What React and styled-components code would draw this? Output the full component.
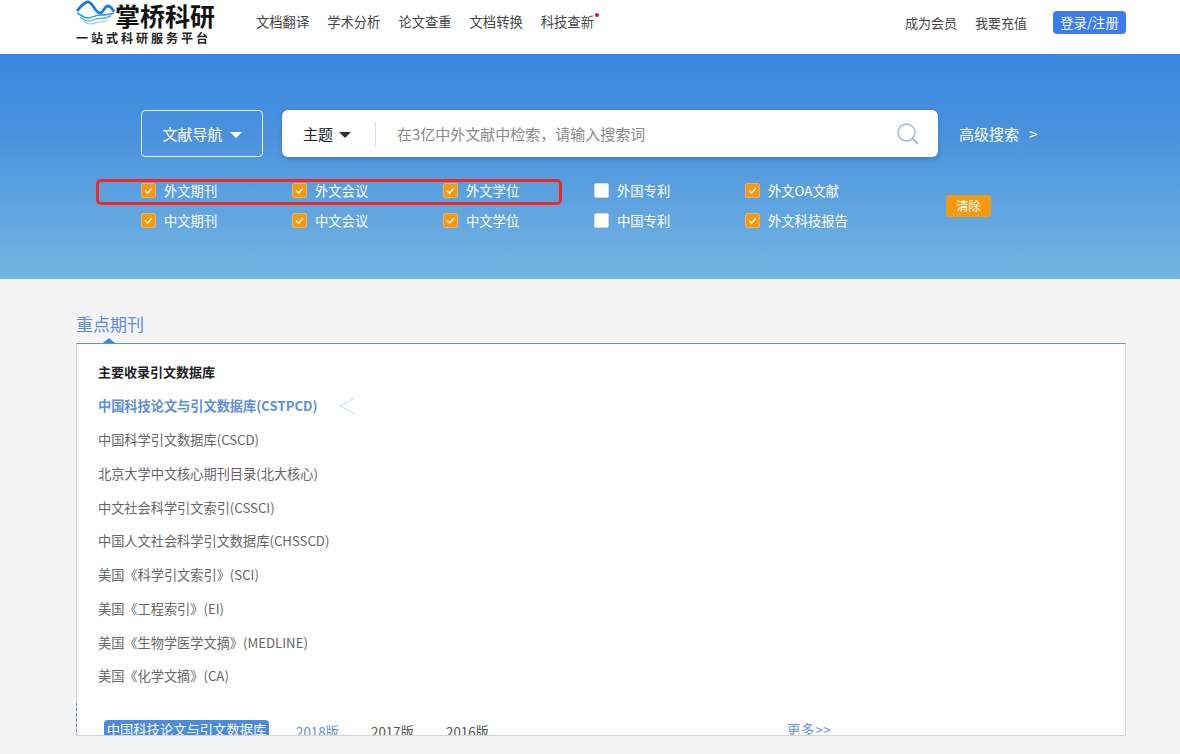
import React from "react";
import styled, { createGlobalStyle } from "styled-components";

const GlobalStyle = createGlobalStyle`
  html, body {
    margin: 0;
    padding: 0;
    height: 754px;
    overflow: hidden;
    background: #f4f4f4;
    font-family: "Noto Sans CJK SC", "Liberation Sans", sans-serif;
  }
  * {
    box-sizing: border-box;
  }
`;

const Header = styled.header`
  height: 54px;
  background: #fff;
  display: flex;
  align-items: flex-start;
  padding: 0 54px 0 76px;
`;

const Logo = styled.div`
  width: 180px;
  height: 54px;
  flex-shrink: 0;
  display: flex;
  flex-direction: column;
`;

const LogoTop = styled.div`
  display: flex;
  align-items: flex-start;
  height: 30px;
`;

const LogoName = styled.span`
  font-size: 25px;
  line-height: 30px;
  font-weight: 700;
  color: #111;
  white-space: nowrap;
`;

const LogoSlogan = styled.span`
  font-size: 12px;
  line-height: 16px;
  font-weight: 700;
  letter-spacing: 3px;
  color: #222;
  white-space: nowrap;
`;

const Nav = styled.nav`
  display: flex;
  gap: 18px;
  padding-top: 12px;
  font-size: 13.3px;
  line-height: 20px;
  color: #444;
`;

const NavItem = styled.a`
  position: relative;
  white-space: nowrap;
  ${(p) =>
    p.$dot &&
    `&::after {
      content: "";
      position: absolute;
      right: -5px;
      top: 1px;
      width: 4px;
      height: 4px;
      border-radius: 50%;
      background: #e3122c;
    }`}
`;

const HeaderRight = styled.div`
  margin-left: auto;
  display: flex;
  align-items: center;
  padding-top: 11px;
  font-size: 13px;
  color: #444;
`;

const HeaderLink = styled.a`
  margin-right: 18px;
  white-space: nowrap;
`;

const LoginButton = styled.button`
  width: 73px;
  height: 23px;
  margin-left: 8px;
  padding: 0;
  border: 0;
  border-radius: 4px;
  background: #3b7df0;
  color: #fff;
  font: inherit;
  font-size: 13.3px;
  white-space: nowrap;
`;

const Hero = styled.section`
  height: 225px;
  background: linear-gradient(180deg, #3a87e0 0%, #4a92de 35%, #75b5e2 100%);
  padding: 56px 0 0 141px;
  position: relative;
`;

const SearchRow = styled.div`
  display: flex;
  align-items: center;
  height: 47px;
  font-size: 15px;
  line-height: 22px;
`;

const GuideButton = styled.div`
  width: 122px;
  height: 47px;
  border: 1px solid #e4f0fb;
  border-radius: 4px;
  display: flex;
  align-items: center;
  justify-content: center;
  gap: 7px;
  color: #fff;
`;

const Caret = styled.span`
  width: 0;
  height: 0;
  border-left: 6.5px solid transparent;
  border-right: 6.5px solid transparent;
  border-top: 6px solid ${(p) => p.$color};
  margin-top: 2px;
`;

const SearchBox = styled.div`
  width: 656px;
  height: 47px;
  margin-left: 19px;
  border-radius: 6px;
  background: #fff;
  box-shadow: 0 2px 5px rgba(40, 80, 150, 0.35);
  display: flex;
  align-items: center;
  padding: 0 18px 0 21px;
`;

const ScopeLabel = styled.span`
  color: #222;
  margin-right: 6px;
`;

const Divider = styled.span`
  width: 1px;
  height: 24px;
  background: #dcdcdc;
  margin: 0 21px 0 24px;
`;

const Placeholder = styled.span`
  flex: 1;
  color: #8a8a8a;
`;

const AdvancedLink = styled.a`
  margin-left: 21px;
  color: #fff;
  white-space: nowrap;
  display: flex;
  gap: 10px;
`;

const Filters = styled.div`
  display: flex;
  margin-top: 19px;
  align-items: center;
`;

const FilterGrid = styled.div`
  display: grid;
  grid-template-columns: repeat(5, 151px);
  grid-auto-rows: 29.5px;
  width: 755px;
`;

const FilterItem = styled.label`
  display: flex;
  align-items: center;
  gap: 8px;
  color: #fff;
  font-size: 13.3px;
  white-space: nowrap;
`;

const CheckBox = styled.span`
  width: 15px;
  height: 15px;
  border-radius: 2px;
  display: flex;
  align-items: center;
  justify-content: center;
  background: ${(p) => (p.$checked ? "#f59a0f" : "#fff")};
  border: 1px solid ${(p) => (p.$checked ? "#e9b26a" : "#d8d8d8")};
`;

const ClearButton = styled.button`
  width: 45px;
  height: 22px;
  margin-left: 50px;
  padding: 0;
  border: 0;
  border-radius: 3px;
  background: #f59a0f;
  color: #fff;
  font: 12px "Noto Sans CJK SC", sans-serif;
`;

const Highlight = styled.div`
  position: absolute;
  left: 96px;
  top: 125px;
  width: 466px;
  height: 26px;
  border: 3px solid #ee2a24;
  border-radius: 5px;
  pointer-events: none;
`;

const Main = styled.main`
  padding: 33px 54px 0 76px;
`;

const SectionTitle = styled.h2`
  margin: 0;
  height: 31px;
  font-size: 17px;
  line-height: 24px;
  font-weight: 400;
  color: #5f8fd8;
`;

const Card = styled.div`
  position: relative;
  height: 393px;
  background: #fff;
  border: 1px solid #d6d6d6;
  border-top: 1px solid #5593e2;
  padding: 18px 0 0 21px;

  &::before {
    content: "";
    position: absolute;
    left: 26px;
    top: -6px;
    border-left: 6px solid transparent;
    border-right: 6px solid transparent;
    border-bottom: 5px solid #3a87e0;
  }
`;

const CardClip = styled.div`
  height: 373px;
  overflow: hidden;
  margin-left: -22px;
  padding-left: 22px;
`;

const ListTitle = styled.div`
  font-size: 13px;
  line-height: 20px;
  font-weight: 700;
  color: #222;
  margin-bottom: 7px;
`;

const ListRow = styled.div`
  height: 33.75px;
  display: flex;
  align-items: center;
  gap: 21px;
  font-size: 13.2px;
  color: ${(p) => (p.$active ? "#5f8fd8" : "#666")};
  font-weight: ${(p) => (p.$active ? 700 : 400)};
  white-space: nowrap;
`;

const BottomBar = styled.div`
  margin: 10px 0 0 -22px;
  padding: 17px 0 0 27px;
  border-left: 1px dashed #5a78c8;
  height: 50px;
  display: flex;
  align-items: flex-start;
  font-size: 13.3px;
  color: #666;
  white-space: nowrap;
`;

const ActiveTab = styled.span`
  width: 165px;
  height: 26px;
  margin-right: 27px;
  background: #4a8be0;
  color: #fff;
  border-radius: 4px;
  text-align: center;
  line-height: 20px;
`;

const YearTab = styled.span`
  width: 75px;
  line-height: 24px;
  color: ${(p) => (p.$active ? "#6a8fd8" : "#555")};
`;

const MoreLink = styled.a`
  margin-left: 266px;
  line-height: 20px;
  color: #6a8fd8;
  letter-spacing: 0.8px;
`;

const Check = () => (
  <svg width="11" height="11" viewBox="0 0 11 11" fill="none">
    <path d="M2 5.5 L4.6 8 L9 3" stroke="#fff" strokeWidth="1.3" />
  </svg>
);

const LogoMark = () => (
  <svg width="39" height="27" viewBox="0 0 39 27" fill="none" style={{ flexShrink: 0 }}>
    <path
      d="M1 11 C4 8 7 2 12 2 C17 2 19 13 24 13 C27.5 13 28.5 6 32 6 C34.5 6 36 9 38 11.5"
      stroke="#1d80d6"
      strokeWidth="2.8"
    />
    <path d="M1 13 C5 15 8 18 12 18 C16 18 19 15 24 15 C28 15 33 15 38 13" stroke="#2f9ee6" strokeWidth="1.6" />
    <path d="M4 17 C7 19 9 21 12.5 21 C16 21 19 18.5 24 18.5 C28 18.5 31 18 35 16" stroke="#5ab8ee" strokeWidth="1.4" />
    <path d="M8 21.5 C10 23 12 24 14 24 C17 24 20 22 24 22 C27 22 29 21.5 31 20" stroke="#8ccdf2" strokeWidth="1.2" />
  </svg>
);

const SearchIcon = () => (
  <svg width="24" height="24" viewBox="0 0 24 24" fill="none" stroke="#9db3df" strokeWidth="1.4">
    <circle cx="10.5" cy="10.5" r="8.5" />
    <path d="M16.8 16.8 L22 22" strokeWidth="1.8" />
  </svg>
);

const ChevronMark = () => (
  <svg width="16" height="18" viewBox="0 0 16 18" fill="none" stroke="#c4d2ee" strokeWidth="1">
    <path d="M15.5 1 L0.8 9 L15.5 17" />
  </svg>
);

const navItems = ["文档翻译", "学术分析", "论文查重", "文档转换", "科技查新"];

const filters = [
  { label: "外文期刊", checked: true },
  { label: "外文会议", checked: true },
  { label: "外文学位", checked: true },
  { label: "外国专利", checked: false },
  { label: "外文OA文献", checked: true },
  { label: "中文期刊", checked: true },
  { label: "中文会议", checked: true },
  { label: "中文学位", checked: true },
  { label: "中国专利", checked: false },
  { label: "外文科技报告", checked: true },
];

const databases = [
  "中国科学引文数据库(CSCD)",
  "北京大学中文核心期刊目录(北大核心)",
  "中文社会科学引文索引(CSSCI)",
  "中国人文社会科学引文数据库(CHSSCD)",
  "美国《科学引文索引》(SCI)",
  "美国《工程索引》(EI)",
  "美国《生物学医学文摘》(MEDLINE)",
  "美国《化学文摘》(CA)",
];

const App = () => {
  return (
    <>
      <GlobalStyle />
      <Header>
        <Logo>
          <LogoTop>
            <LogoMark />
            <LogoName>掌桥科研</LogoName>
          </LogoTop>
          <LogoSlogan>一站式科研服务平台</LogoSlogan>
        </Logo>
        <Nav>
          {navItems.map((item) => (
            <NavItem key={item} $dot={item === "科技查新"}>
              {item}
            </NavItem>
          ))}
        </Nav>
        <HeaderRight>
          <HeaderLink>成为会员</HeaderLink>
          <HeaderLink>我要充值</HeaderLink>
          <LoginButton>登录/注册</LoginButton>
        </HeaderRight>
      </Header>

      <Hero>
        <SearchRow>
          <GuideButton>
            文献导航
            <Caret $color="#fff" />
          </GuideButton>
          <SearchBox>
            <ScopeLabel>主题</ScopeLabel>
            <Caret $color="#333" />
            <Divider />
            <Placeholder>在3亿中外文献中检索&#xFF0C;请输入搜索词</Placeholder>
            <SearchIcon />
          </SearchBox>
          <AdvancedLink>
            高级搜索
            <span>&gt;</span>
          </AdvancedLink>
        </SearchRow>
        <Filters>
          <FilterGrid>
            {filters.map((f) => (
              <FilterItem key={f.label}>
                <CheckBox $checked={f.checked}>{f.checked && <Check />}</CheckBox>
                {f.label}
              </FilterItem>
            ))}
          </FilterGrid>
          <ClearButton>清除</ClearButton>
        </Filters>
        <Highlight />
      </Hero>

      <Main>
        <SectionTitle>重点期刊</SectionTitle>
        <Card>
          <CardClip>
            <ListTitle>主要收录引文数据库</ListTitle>
            <ListRow $active>
              中国科技论文与引文数据库(CSTPCD)
              <ChevronMark />
            </ListRow>
            {databases.map((name) => (
              <ListRow key={name}>{name}</ListRow>
            ))}
            <BottomBar>
              <ActiveTab>中国科技论文与引文数据库</ActiveTab>
              <YearTab $active>2018版</YearTab>
              <YearTab>2017版</YearTab>
              <YearTab>2016版</YearTab>
              <MoreLink>更多&gt;&gt;</MoreLink>
            </BottomBar>
          </CardClip>
        </Card>
      </Main>
    </>
  );
};

export default App;
